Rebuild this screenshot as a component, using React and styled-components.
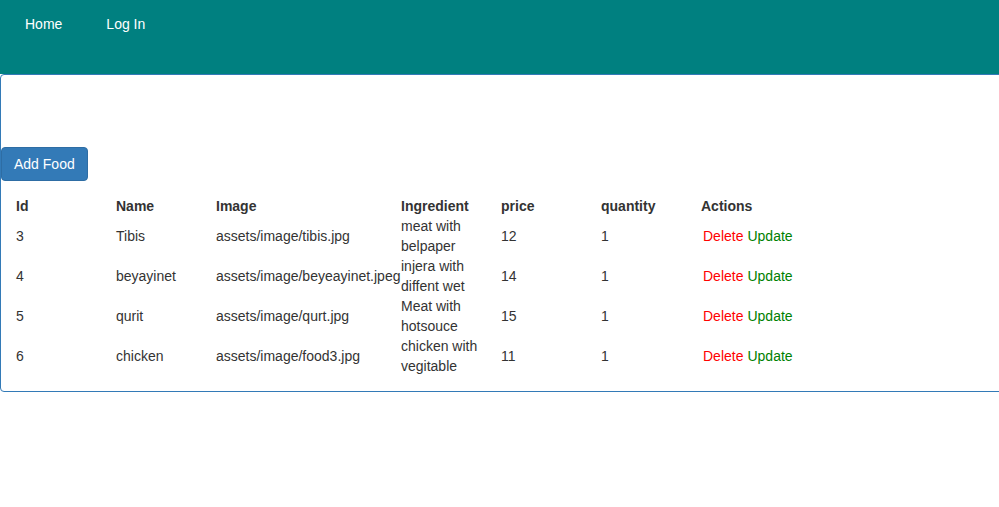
import React from "react";
import styled, { createGlobalStyle } from "styled-components";

const Global = createGlobalStyle`
  html, body { margin: 0; padding: 0; background: #fff; overflow-x: hidden; }
  body {
    font-family: "Liberation Sans", Arial, Helvetica, sans-serif;
    font-size: 14px;
    line-height: 20px;
    color: #333;
  }
`;

const NavBar = styled.nav`
  height: 74px;
  background: #008080;
  display: flex;
  align-items: flex-start;
  padding: 14px 0 0 25px;
  box-sizing: border-box;
  gap: 44px;
`;

const NavLink = styled.a`
  color: #fff;
  text-decoration: none;
  font-size: 14px;
  line-height: 20px;
`;

const Panel = styled.section`
  border: 1px solid #337ab7;
  border-radius: 4px;
  margin-right: -10px;
  padding: 72px 0 15px 0;
`;

const AddButton = styled.button`
  font-family: inherit;
  font-size: 14px;
  line-height: 20px;
  color: #fff;
  background: #337ab7;
  border: 1px solid #2e6da4;
  border-radius: 4px;
  padding: 6px 12px;
  height: 34px;
  cursor: pointer;
  display: block;
`;

const Table = styled.table`
  border-collapse: collapse;
  border-spacing: 0;
  margin: 15px 0 0 15px;
`;

const Th = styled.th`
  text-align: left;
  font-weight: bold;
  padding: 0;
  width: ${(p) => p.$w || "100px"};
  vertical-align: middle;
`;

const Td = styled.td`
  padding: 0;
  width: ${(p) => p.$w || "100px"};
  height: 40px;
  vertical-align: middle;
`;

const ActionLink = styled.a`
  color: ${(p) => (p.$danger ? "#ff0000" : "#008000")};
  text-decoration: none;
  margin-left: ${(p) => (p.$danger ? "2px" : "4px")};
`;

const foods = [
  { id: 3, name: "Tibis", image: "assets/image/tibis.jpg", ing: ["meat with", "belpaper"], price: 12, qty: 1 },
  { id: 4, name: "beyayinet", image: "assets/image/beyeayinet.jpeg", ing: ["injera with", "diffent wet"], price: 14, qty: 1 },
  { id: 5, name: "qurit", image: "assets/image/qurt.jpg", ing: ["Meat with", "hotsouce"], price: 15, qty: 1 },
  { id: 6, name: "chicken", image: "assets/image/food3.jpg", ing: ["chicken with", "vegitable"], price: 11, qty: 1 },
];

export default function App() {
  return (
    <>
      <Global />
      <NavBar>
        <NavLink href="#">Home</NavLink>
        <NavLink href="#">Log In</NavLink>
      </NavBar>
      <Panel>
        <AddButton>Add Food</AddButton>
        <Table>
          <thead>
            <tr>
              <Th>Id</Th>
              <Th>Name</Th>
              <Th $w="185px">Image</Th>
              <Th>Ingredient</Th>
              <Th>price</Th>
              <Th>quantity</Th>
              <Th>Actions</Th>
            </tr>
          </thead>
          <tbody>
            {foods.map((f) => (
              <tr key={f.id}>
                <Td>{f.id}</Td>
                <Td>{f.name}</Td>
                <Td $w="185px">{f.image}</Td>
                <Td>
                  {f.ing[0]}
                  <br />
                  {f.ing[1]}
                </Td>
                <Td>{f.price}</Td>
                <Td>{f.qty}</Td>
                <Td>
                  <ActionLink href="#" $danger>Delete</ActionLink>
                  <ActionLink href="#">Update</ActionLink>
                </Td>
              </tr>
            ))}
          </tbody>
        </Table>
      </Panel>
    </>
  );
}
